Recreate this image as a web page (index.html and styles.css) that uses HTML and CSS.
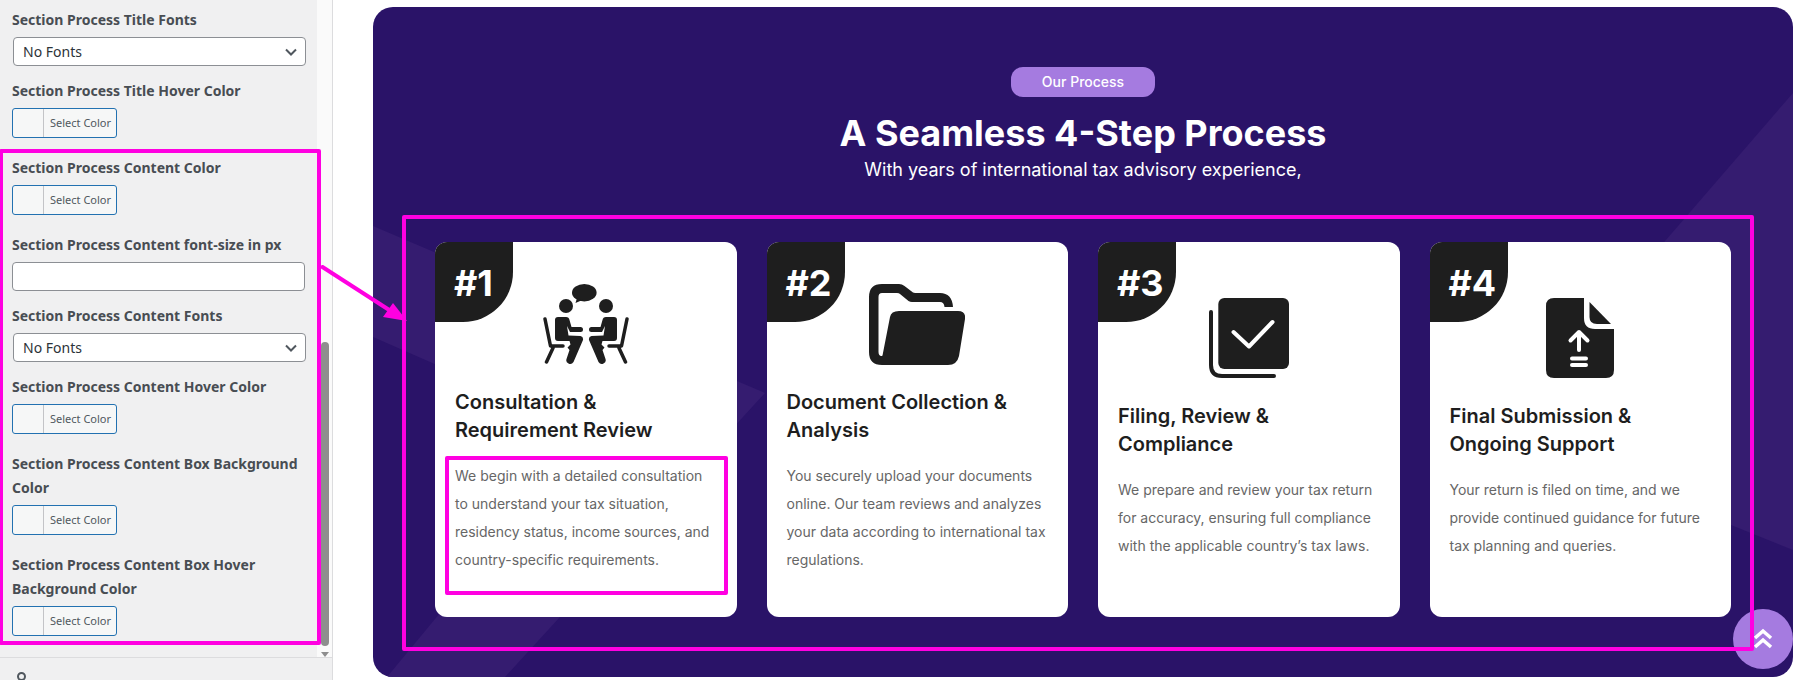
FILE: index.html
```html
<!DOCTYPE html>
<html lang="en">
<head>
    <meta charset="UTF-8">
    <meta name="viewport" content="width=device-width, initial-scale=1.0">
    <title>Section Process Settings</title>
    <link rel="stylesheet" href="styles.css">
</head>
<body>

    <!-- Settings sidebar -->
    <aside class="sidebar">
        <div class="sidebar-body">
            <div class="fields">
                <div class="field field-text">
                    <label class="field-label">Section Process Title Fonts</label>
                    <div class="select">No Fonts
                        <svg class="select-arrow" viewBox="0 0 12 8"><path d="M1 1.5l5 5 5-5"/></svg>
                    </div>
                </div>
                <div class="field">
                    <label class="field-label">Section Process Title Hover Color</label>
                    <div class="color-btn"><span class="swatch"></span><span class="color-text">Select Color</span></div>
                </div>
                <div class="field">
                    <label class="field-label">Section Process Content Color</label>
                    <div class="color-btn"><span class="swatch"></span><span class="color-text">Select Color</span></div>
                </div>
                <div class="field field-text">
                    <label class="field-label">Section Process Content font-size in px</label>
                    <input class="text-input" type="text">
                </div>
                <div class="field field-text">
                    <label class="field-label">Section Process Content Fonts</label>
                    <div class="select">No Fonts
                        <svg class="select-arrow" viewBox="0 0 12 8"><path d="M1 1.5l5 5 5-5"/></svg>
                    </div>
                </div>
                <div class="field">
                    <label class="field-label">Section Process Content Hover Color</label>
                    <div class="color-btn"><span class="swatch"></span><span class="color-text">Select Color</span></div>
                </div>
                <div class="field">
                    <label class="field-label">Section Process Content Box Background Color</label>
                    <div class="color-btn"><span class="swatch"></span><span class="color-text">Select Color</span></div>
                </div>
                <div class="field">
                    <label class="field-label">Section Process Content Box Hover Background Color</label>
                    <div class="color-btn"><span class="swatch"></span><span class="color-text">Select Color</span></div>
                </div>
            </div>
            <div class="scrollbar">
                <div class="scroll-thumb"></div>
                <div class="scroll-arrow"></div>
            </div>
        </div>
        <div class="sidebar-foot"><span class="foot-icon"></span></div>
    </aside>

    <!-- Preview -->
    <main class="preview">
        <section class="process">
            <svg class="process-bg" viewBox="0 0 1420 670" preserveAspectRatio="none">
                <path d="M0 219L392 386 132 670H14L217 425 0 330Z"/>
                <path d="M1420 86L1127 425 1420 543Z"/>
            </svg>

            <span class="pill">Our Process</span>
            <h2 class="process-title">A Seamless 4-Step Process</h2>
            <p class="process-sub">With years of international tax advisory experience,</p>

            <div class="cards">
                <article class="card">
                    <span class="badge">#1</span>
                    <div class="card-icon">
                        <svg width="86" height="80" viewBox="0 0 86 80">
                            <defs>
                                <g id="sitter">
                                    <circle cx="23" cy="22" r="7"/>
                                    <path class="chair" d="M2 35l5.5 27H20M10 64L3.5 78"/>
                                    <path d="M15 33h8q3 0 3.500 3l2 7h9q2.500 0 2.500 2.500t-2.500 2.500H27l-1 -2-2 -4 1.500 9.500 12 .500q3 .500 2.500 4l-9.500 22q-2 3-5 1.500-3-1.500-2-4.500l3-9 -2 -2.500 3-3-1 -3.500H15q-3 0-3-3V36q0-3 3-3z"/>
                                </g>
                            </defs>
                            <use href="#sitter"/>
                            <use href="#sitter" transform="translate(86) scale(-1 1)"/>
                            <ellipse cx="41.300" cy="8.700" rx="12.300" ry="8.700"/>
                            <path d="M34 14l-1.500 5 7-3z"/>
                        </svg>
                    </div>
                    <h3 class="card-title">Consultation &amp; Requirement Review</h3>
                    <p class="card-text">We begin with a detailed consultation to understand your tax situation, residency status, income sources, and country-specific requirements.</p>
                </article>

                <article class="card">
                    <span class="badge">#2</span>
                    <div class="card-icon">
                        <svg width="96" height="81" viewBox="0 0 96 81">
                            <path d="M13 0H30Q33 0 35.500 2L44 8.600Q45 9 46 9H71Q83 9 84 23H75.500Q75 18 71 18H43Q41 18 39.500 17L31 10Q30 9 28 9H13Q9.500 9 9.500 13V68C9.500 71.500 12 73 13.500 71.500L21 33Q22 27 30 27H89Q97 27 96 35L90 72Q88 81 79 81H13Q0 81 0 68V13Q0 0 13 0Z"/>
                        </svg>
                    </div>
                    <h3 class="card-title">Document Collection &amp; Analysis</h3>
                    <p class="card-text">You securely upload your documents online. Our team reviews and analyzes your data according to international tax regulations.</p>
                </article>

                <article class="card card-low">
                    <span class="badge">#3</span>
                    <div class="card-icon">
                        <svg width="80" height="80" viewBox="0 0 80 80">
                            <rect x="9.300" width="70.700" height="71" rx="6"/>
                            <path class="line-dark" d="M2 14V67q0 11 11 11H65"/>
                            <path class="line-white" d="M24.500 34L40 48.500 63.500 24"/>
                        </svg>
                    </div>
                    <h3 class="card-title">Filing, Review &amp; Compliance</h3>
                    <p class="card-text">We prepare and review your tax return for accuracy, ensuring full compliance with the applicable country’s tax laws.</p>
                </article>

                <article class="card card-low">
                    <span class="badge">#4</span>
                    <div class="card-icon">
                        <svg width="68" height="80" viewBox="0 0 68 80">
                            <path d="M8 0H38V20Q38 31 49 31H68V72Q68 80 60 80H8Q0 80 0 72V8Q0 0 8 0Z"/>
                            <path d="M43.500 4L65 26H51Q43.500 26 43.500 19Z"/>
                            <path class="line-white" d="M33 52V34M24.500 42.500L33 34l8.500 8.500M26 60.500H40M26 67H40"/>
                        </svg>
                    </div>
                    <h3 class="card-title">Final Submission &amp; Ongoing Support</h3>
                    <p class="card-text">Your return is filed on time, and we provide continued guidance for future tax planning and queries.</p>
                </article>
            </div>
        </section>
    </main>

    <!-- Back to top button -->
    <a class="to-top" href="#">
        <svg width="20" height="22" viewBox="0 0 20 22"><path d="M2 10l8-7 8 7M2 19l8-7 8 7"/></svg>
    </a>

    <!-- Magenta annotations drawn over the screenshot -->
    <div class="mark mark-side"></div>
    <div class="mark mark-cards"></div>
    <div class="mark mark-text"></div>
    <svg class="mark-arrow" width="100" height="70" viewBox="0 0 100 70">
        <path class="arrow-line" d="M0 1L76 50"/>
        <path class="arrow-head" d="M86 56L72 38 62 52Z"/>
    </svg>

</body>
</html>
```

FILE: styles.css
```css
/* Page */
* {
    box-sizing: border-box;
}

body {
    margin: 0;
    width: 1802px;
    height: 680px;
    position: relative;
    overflow: hidden;
    display: flex;
    background: white;
    font-family: Inter, Arial, sans-serif;
}

/* Sidebar */
.sidebar {
    width: 333px;
    height: 680px;
    flex-shrink: 0;
    display: flex;
    flex-direction: column;
    background: #f0f0f1;
    border-right: 1px solid #dcdcde;
}

.sidebar-body {
    display: flex;
    height: 664px;
    border-bottom: 1px solid #dcdcde;
}

.fields {
    width: 317px;
    padding: 8px 0 0 12px;
}

.field {
    margin-bottom: 18px;
}

.field-text {
    margin-bottom: 13px;
}

.field-label {
    display: block;
    margin-bottom: 5px;
    font-family: "Noto Sans", sans-serif;
    font-size: 14px;
    font-weight: 700;
    line-height: 24px;
    color: #484d53;
}

.select {
    position: relative;
    width: 293px;
    height: 29px;
    margin-left: 1px;
    padding-left: 9px;
    font-family: "Noto Sans", sans-serif;
    font-size: 14px;
    line-height: 27px;
    color: #2c3338;
    background: white;
    border: 1px solid #8c8f94;
    border-radius: 4px;
}

.select-arrow {
    position: absolute;
    right: 8px;
    top: 10px;
    width: 12px;
    height: 8px;
    fill: none;
    stroke: #50575e;
    stroke-width: 2;
}

.text-input {
    display: block;
    width: 293px;
    height: 29px;
    background: white;
    border: 1px solid #8c8f94;
    border-radius: 4px;
}

.color-btn {
    display: flex;
    width: 105px;
    height: 30px;
    background: #f6f7f7;
    border: 1px solid #2271b1;
    border-radius: 3px;
}

.swatch {
    width: 31px;
    border-right: 1px solid #c3c4c7;
}

.color-text {
    padding-left: 6px;
    font-family: "Noto Sans", sans-serif;
    font-size: 11px;
    line-height: 28px;
    color: #50575e;
}

/* Fake scrollbar */
.scrollbar {
    width: 15px;
    background: #fafafa;
    padding: 342px 3px 0 4px;
}

.scroll-thumb {
    height: 304px;
    background: #8e8e8e;
    border-radius: 4px;
}

.scroll-arrow {
    width: 0;
    margin-top: 6px;
    border-left: 4.5px solid transparent;
    border-right: 4.5px solid transparent;
    border-top: 5px solid #8e8e8e;
}

.sidebar-foot {
    padding: 14px 0 0 17px;
}

.foot-icon {
    display: block;
    width: 9px;
    height: 9px;
    border: 2px solid #50575e;
    border-radius: 50%;
}

/* Preview */
.preview {
    flex: 1;
    padding: 7px 9px 3px 40px;
}

.process {
    position: relative;
    height: 670px;
    padding-top: 60px;
    overflow: hidden;
    background: #2a1368;
    border-radius: 20px;
    text-align: center;
}

.process-bg {
    position: absolute;
    left: 0;
    top: 0;
    width: 100%;
    height: 100%;
    fill: #351c70;
}

.pill {
    position: relative;
    display: block;
    width: 144px;
    height: 30px;
    margin: 0 auto;
    font-size: 14px;
    font-weight: 500;
    line-height: 30px;
    color: white;
    background: #a57be0;
    border-radius: 12px;
}

.process-title {
    position: relative;
    margin: 14px 0 0;
    font-size: 36px;
    font-weight: 700;
    line-height: 44px;
    color: white;
}

.process-sub {
    position: relative;
    margin: 3px 0 60px;
    font-size: 18px;
    line-height: 24px;
    color: white;
}

/* Cards */
.cards {
    position: relative;
    display: grid;
    grid-template-columns: repeat(4, 1fr);
    gap: 30px;
    margin: 0 62px;
    text-align: left;
}

.card {
    position: relative;
    height: 375px;
    padding: 42px 20px 0;
    overflow: hidden;
    background: white;
    border-radius: 12px;
}

.card-low {
    padding-top: 56px;
}

.badge {
    position: absolute;
    left: 0;
    top: 0;
    width: 78px;
    height: 80px;
    padding: 19px 0 0 19px;
    font-size: 36px;
    font-weight: 700;
    line-height: 44px;
    color: white;
    background: #1e1e1e;
    border-bottom-right-radius: 50px;
}

.card-icon {
    display: flex;
    justify-content: center;
    height: 81px;
    margin-bottom: 23px;
    fill: #1e1e1e;
}

.chair,
.line-dark,
.line-white {
    fill: none;
    stroke-linecap: round;
    stroke-linejoin: round;
}

.chair {
    stroke: #1e1e1e;
    stroke-width: 3.5;
}

.line-dark {
    stroke: #1e1e1e;
    stroke-width: 4;
}

.line-white {
    stroke: white;
    stroke-width: 4;
}

.card-title {
    margin: 0 0 18px;
    font-size: 20px;
    font-weight: 600;
    line-height: 28px;
    color: #1e1e1e;
}

.card-text {
    margin: 0;
    font-size: 14px;
    line-height: 28px;
    color: #666666;
}

/* Back to top */
.to-top {
    position: absolute;
    left: 1733px;
    top: 609px;
    width: 60px;
    height: 60px;
    display: flex;
    align-items: center;
    justify-content: center;
    background: #a57be0;
    border-radius: 50%;
}

.to-top svg {
    fill: none;
    stroke: white;
    stroke-width: 3.5;
}

/* Annotations */
.mark {
    position: absolute;
    border: 4px solid #ff00e1;
    border-radius: 2px;
}

.mark-side {
    left: -1px;
    top: 149px;
    width: 322px;
    height: 496px;
}

.mark-cards {
    left: 402px;
    top: 215px;
    width: 1352px;
    height: 436px;
}

.mark-text {
    left: 445px;
    top: 456px;
    width: 283px;
    height: 139px;
}

.mark-arrow {
    position: absolute;
    left: 321px;
    top: 265px;
}

.arrow-line {
    stroke: #ff00e1;
    stroke-width: 4;
}

.arrow-head {
    fill: #ff00e1;
}
```
